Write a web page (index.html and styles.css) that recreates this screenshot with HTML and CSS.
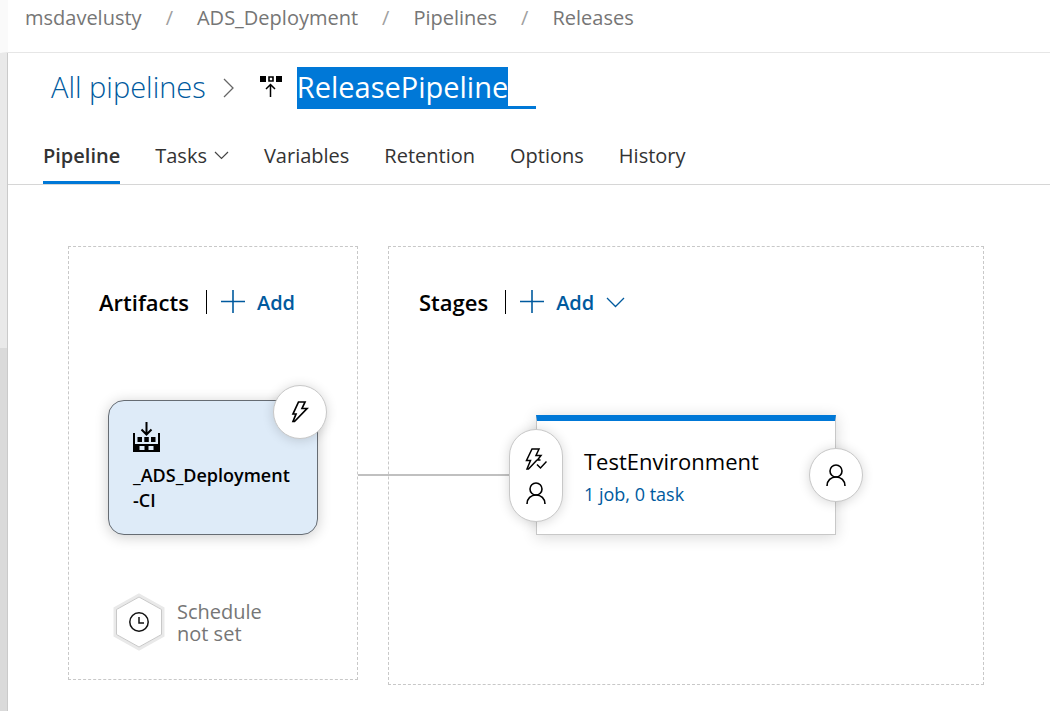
FILE: index.html
```html
<!DOCTYPE html>
<html lang="en">
<head>
<meta charset="utf-8">
<title>ReleasePipeline - Pipelines</title>
<link rel="stylesheet" href="styles.css">
</head>
<body>
<div class="app">
  <header class="topbar">
    <nav class="crumbs" aria-label="Breadcrumb">
      <a href="#">msdavelusty</a><span class="slash">/</span>
      <a href="#">ADS_Deployment</a><span class="slash">/</span>
      <a href="#">Pipelines</a><span class="slash">/</span>
      <a href="#">Releases</a>
    </nav>
  </header>
  <div class="body">
    <aside class="rail"><div class="rail-top"></div></aside>
    <main class="main">
      <div class="title-row">
        <a class="all" href="#">All pipelines</a>
        <svg class="chev-right" width="12" height="20" viewBox="0 0 12 20" fill="none" stroke="#666" stroke-width="1.3"><path d="M1 1l9 9-9 9"/></svg>
        <svg class="release-icon" width="22" height="22" viewBox="0 0 22 22" fill="none" stroke="#000"><path d="M0 0h6v6H0zM16 0h6v6h-6z" fill="#000" stroke="none"/><path d="M9 1h4v4H9z" stroke-width="1.6"/><path d="M10.5 21V9M6 13l4.500-4.500L15 13" stroke-width="1.500"/></svg>
        <input class="name" id="pipeline-name" type="text" value="ReleasePipeline" aria-label="Pipeline name" spellcheck="false">
      </div>
      <nav class="tabs" aria-label="Pipeline sections">
        <a class="tab active" href="#">Pipeline</a>
        <a class="tab" href="#">Tasks<svg width="15" height="9" viewBox="0 0 15 9" fill="none" stroke="#444" stroke-width="1.200"><path d="M1 1l6.500 6.500L14 1"/></svg></a>
        <a class="tab" href="#">Variables</a>
        <a class="tab" href="#">Retention</a>
        <a class="tab" href="#">Options</a>
        <a class="tab" href="#">History</a>
      </nav>
      <div class="canvas">
        <section class="panel artifacts">
          <div class="panel-head">
            <h2>Artifacts</h2>
            <button class="add" type="button"><svg width="24" height="24" viewBox="0 0 24 24" stroke="#005a9e" stroke-width="1.600"><path d="M0 11.500h24M12 0v23"/></svg>Add</button>
          </div>
          <div class="artifact">
            <svg width="27" height="31" viewBox="0 0 27 31" fill="none" stroke="#000"><path d="M0 11h2v11h23V11h2v19H0z" fill="#000" stroke="none"/><path d="M4.500 15h4.500v5H4.500zM11.300 15h4.500v5h-4.500zM18 15h4.500v5H18z" fill="#000" stroke="none"/><path d="M6.500 24h5v4h-5zM15.500 24h5v4h-5z" fill="#deebf8" stroke="none"/><path d="M13.500 0v12M8.500 7.500l5 5 5-5" stroke-width="2"/></svg>
            <div class="artifact-name">_ADS_Deployment<wbr>-CI</div>
            <button class="badge trigger" type="button" aria-label="Continuous deployment trigger"><svg width="18" height="22" viewBox="0 0 18 22" fill="none" stroke="#000" stroke-width="1.700"><path d="M7.500 1h6.500l-3 6.500h5L3.500 20.500H2l3-7.500H2z"/></svg></button>
          </div>
          <div class="schedule">
            <svg width="52" height="58" viewBox="0 0 52 58" fill="none"><path d="M26 2l24 13.500v27L26 56 2 42.500v-27z" stroke="#e9e9e9" stroke-width="3"/><path d="M26 4l22.500 12.500v25L26 54 3.500 41.500v-25z" fill="#fff" stroke="#c8c8c8"/><circle cx="26" cy="29" r="9.200" stroke="#111" stroke-width="1.500"/><path d="M26 24v6h5" stroke="#111" stroke-width="1.500"/></svg>
            <div class="schedule-text">Schedule not set</div>
          </div>
        </section>
        <section class="panel stages">
          <div class="panel-head">
            <h2>Stages</h2>
            <button class="add" type="button"><svg width="24" height="24" viewBox="0 0 24 24" stroke="#005a9e" stroke-width="1.600"><path d="M0 11.500h24M12 0v23"/></svg>Add<svg width="19" height="11" viewBox="0 0 19 11" fill="none" stroke="#005a9e" stroke-width="1.300"><path d="M1 1l8.500 8.500L18 1"/></svg></button>
          </div>
          <div class="stage">
            <div class="stage-name">TestEnvironment</div>
            <a class="stage-jobs" href="#">1 job, 0 task</a>
            <button class="badge pre" type="button" aria-label="Pre-deployment conditions">
              <svg width="22" height="22" viewBox="0 0 22 22" fill="none" stroke="#000" stroke-width="1.500"><path d="M15.500 12h-3L16 7.500h-5L14 1H7L1.500 12.500H5.500L2 21h1.500L12 12M12 16.500l3.500 3.500 6-6.500"/></svg>
              <svg width="20" height="22" viewBox="0 0 20 22" fill="none" stroke="#000" stroke-width="1.600"><circle cx="10" cy="7" r="6"/><path d="M1 22c0-5.500 4-9 9-9s9 3.500 9 9"/></svg>
            </button>
            <button class="badge post" type="button" aria-label="Post-deployment conditions"><svg width="20" height="22" viewBox="0 0 20 22" fill="none" stroke="#000" stroke-width="1.600"><circle cx="10" cy="7" r="6"/><path d="M1 22c0-5.500 4-9 9-9s9 3.500 9 9"/></svg></button>
          </div>
        </section>
      </div>
    </main>
  </div>
</div>
<script src="app.js"></script>
</body>
</html>
```
FILE: styles.css
```css
* { box-sizing: border-box; }
body {
  margin: 0;
  font-family: "Open Sans", "Noto Sans", sans-serif;
  font-size: 20px;
  color: #000;
  background: #fff;
}
a { text-decoration: none; color: inherit; }
button { font: inherit; border: 0; background: none; padding: 0; cursor: pointer; }
svg { flex: none; display: block; }
.app { min-height: 100vh; display: flex; flex-direction: column; }
.topbar {
  height: 53px;
  border-bottom: 1px solid #e6e6e6;
  border-left: 8px solid #fafafa;
  padding: 4px 17px 0;
}
.crumbs { display: flex; gap: 24px; line-height: 28px; color: #767676; white-space: nowrap; }
.slash { color: #a0a0a0; }
.body { flex: 1; display: flex; }
.rail { flex: none; width: 8px; background: #dadada; border-right: 1px solid #cacaca; }
.rail-top { height: 295px; background: #e9e9e9; }
.main { flex: 1; min-width: 0; }
.title-row { display: flex; align-items: center; padding: 11px 43px 0; height: 56px; font-size: 29px; }
.all { color: #005a9e; font-weight: 300; white-space: nowrap; }
.chev-right { margin: 2px 25px 0 17px; }
.release-icon { margin-right: 15px; }
.name {
  width: 239px;
  height: 45px;
  padding: 2px 0 0;
  border: 0;
  border-bottom: 3px solid #0078d7;
  outline: 0;
  font: inherit;
  color: #000;
  background: none;
}
.name::selection { background: #0078d7; color: #fff; }
.tabs {
  display: flex;
  gap: 35px;
  margin-top: 16px;
  padding: 0 35px;
  border-bottom: 1px solid #d6d6d6;
  color: #333;
  white-space: nowrap;
}
.tab { display: flex; align-items: center; gap: 7px; height: 59px; padding-top: 5px; border-bottom: 3px solid transparent; }
.tab.active { font-weight: 600; border-color: #0078d7; }
.canvas { display: flex; align-items: flex-start; gap: 30px; padding: 61px 66px 26px 60px; }
.panel { border: 1px dashed #c8c8c8; padding: 39px 30px 30px; }
.artifacts { flex: none; width: 290px; padding-bottom: 28px; }
.stages { flex: 1; min-width: 0; padding-bottom: 149px; }
.panel-head { display: flex; align-items: center; height: 32px; }
.panel-head h2 { margin: 0; padding-right: 17px; font-size: 22px; line-height: 24px; font-weight: 600; border-right: 1px solid #000; }
.add { display: flex; align-items: center; gap: 12px; margin-left: 14px; color: #005a9e; font-weight: 600; }
.artifact {
  position: relative;
  width: 210px;
  height: 135px;
  margin: 82px 0 0 9px;
  padding: 21px 24px;
  border: 1px solid #666c73;
  border-radius: 16px;
  background: #deebf8;
  box-shadow: 0 2px 14px rgba(0, 0, 0, .2);
}
.artifact-name { margin-top: 10px; font-size: 18px; line-height: 25px; font-weight: 600; }
.badge {
  position: absolute;
  display: flex;
  flex-direction: column;
  align-items: center;
  justify-content: center;
  gap: 12px;
  width: 54px;
  height: 54px;
  border: 1px solid #c8c8c8;
  border-radius: 27px;
  background: #fff;
  box-shadow: 0 1px 12px rgba(0, 0, 0, .16);
}
.trigger { top: -16px; right: -10px; }
.schedule { display: flex; align-items: center; gap: 12px; margin: 58px 0 0 14px; color: #767676; }
.schedule-text { width: 100px; padding-top: 2px; line-height: 22px; }
.stage {
  position: relative;
  width: 300px;
  height: 120px;
  margin: 97px 0 0 117px;
  padding: 23px 47px;
  border: 1px solid #c8c8c8;
  border-top: 6px solid #0078d7;
  background: #fff;
  box-shadow: 0 2px 14px rgba(0, 0, 0, .16);
}
.stage::before {
  content: "";
  position: absolute;
  top: 53px;
  right: 100%;
  width: 179px;
  height: 2px;
  background: #c0c0c0;
}
.stage-name { font-size: 22px; line-height: 34px; }
.stage-jobs { display: block; font-size: 18px; line-height: 32px; color: #005a9e; }
.pre { left: -28px; top: 8px; height: 93px; }
.post { right: -28px; top: 27px; }
```
FILE: app.js
```js
const nameField = document.getElementById("pipeline-name");
nameField.focus();
nameField.select();
```
